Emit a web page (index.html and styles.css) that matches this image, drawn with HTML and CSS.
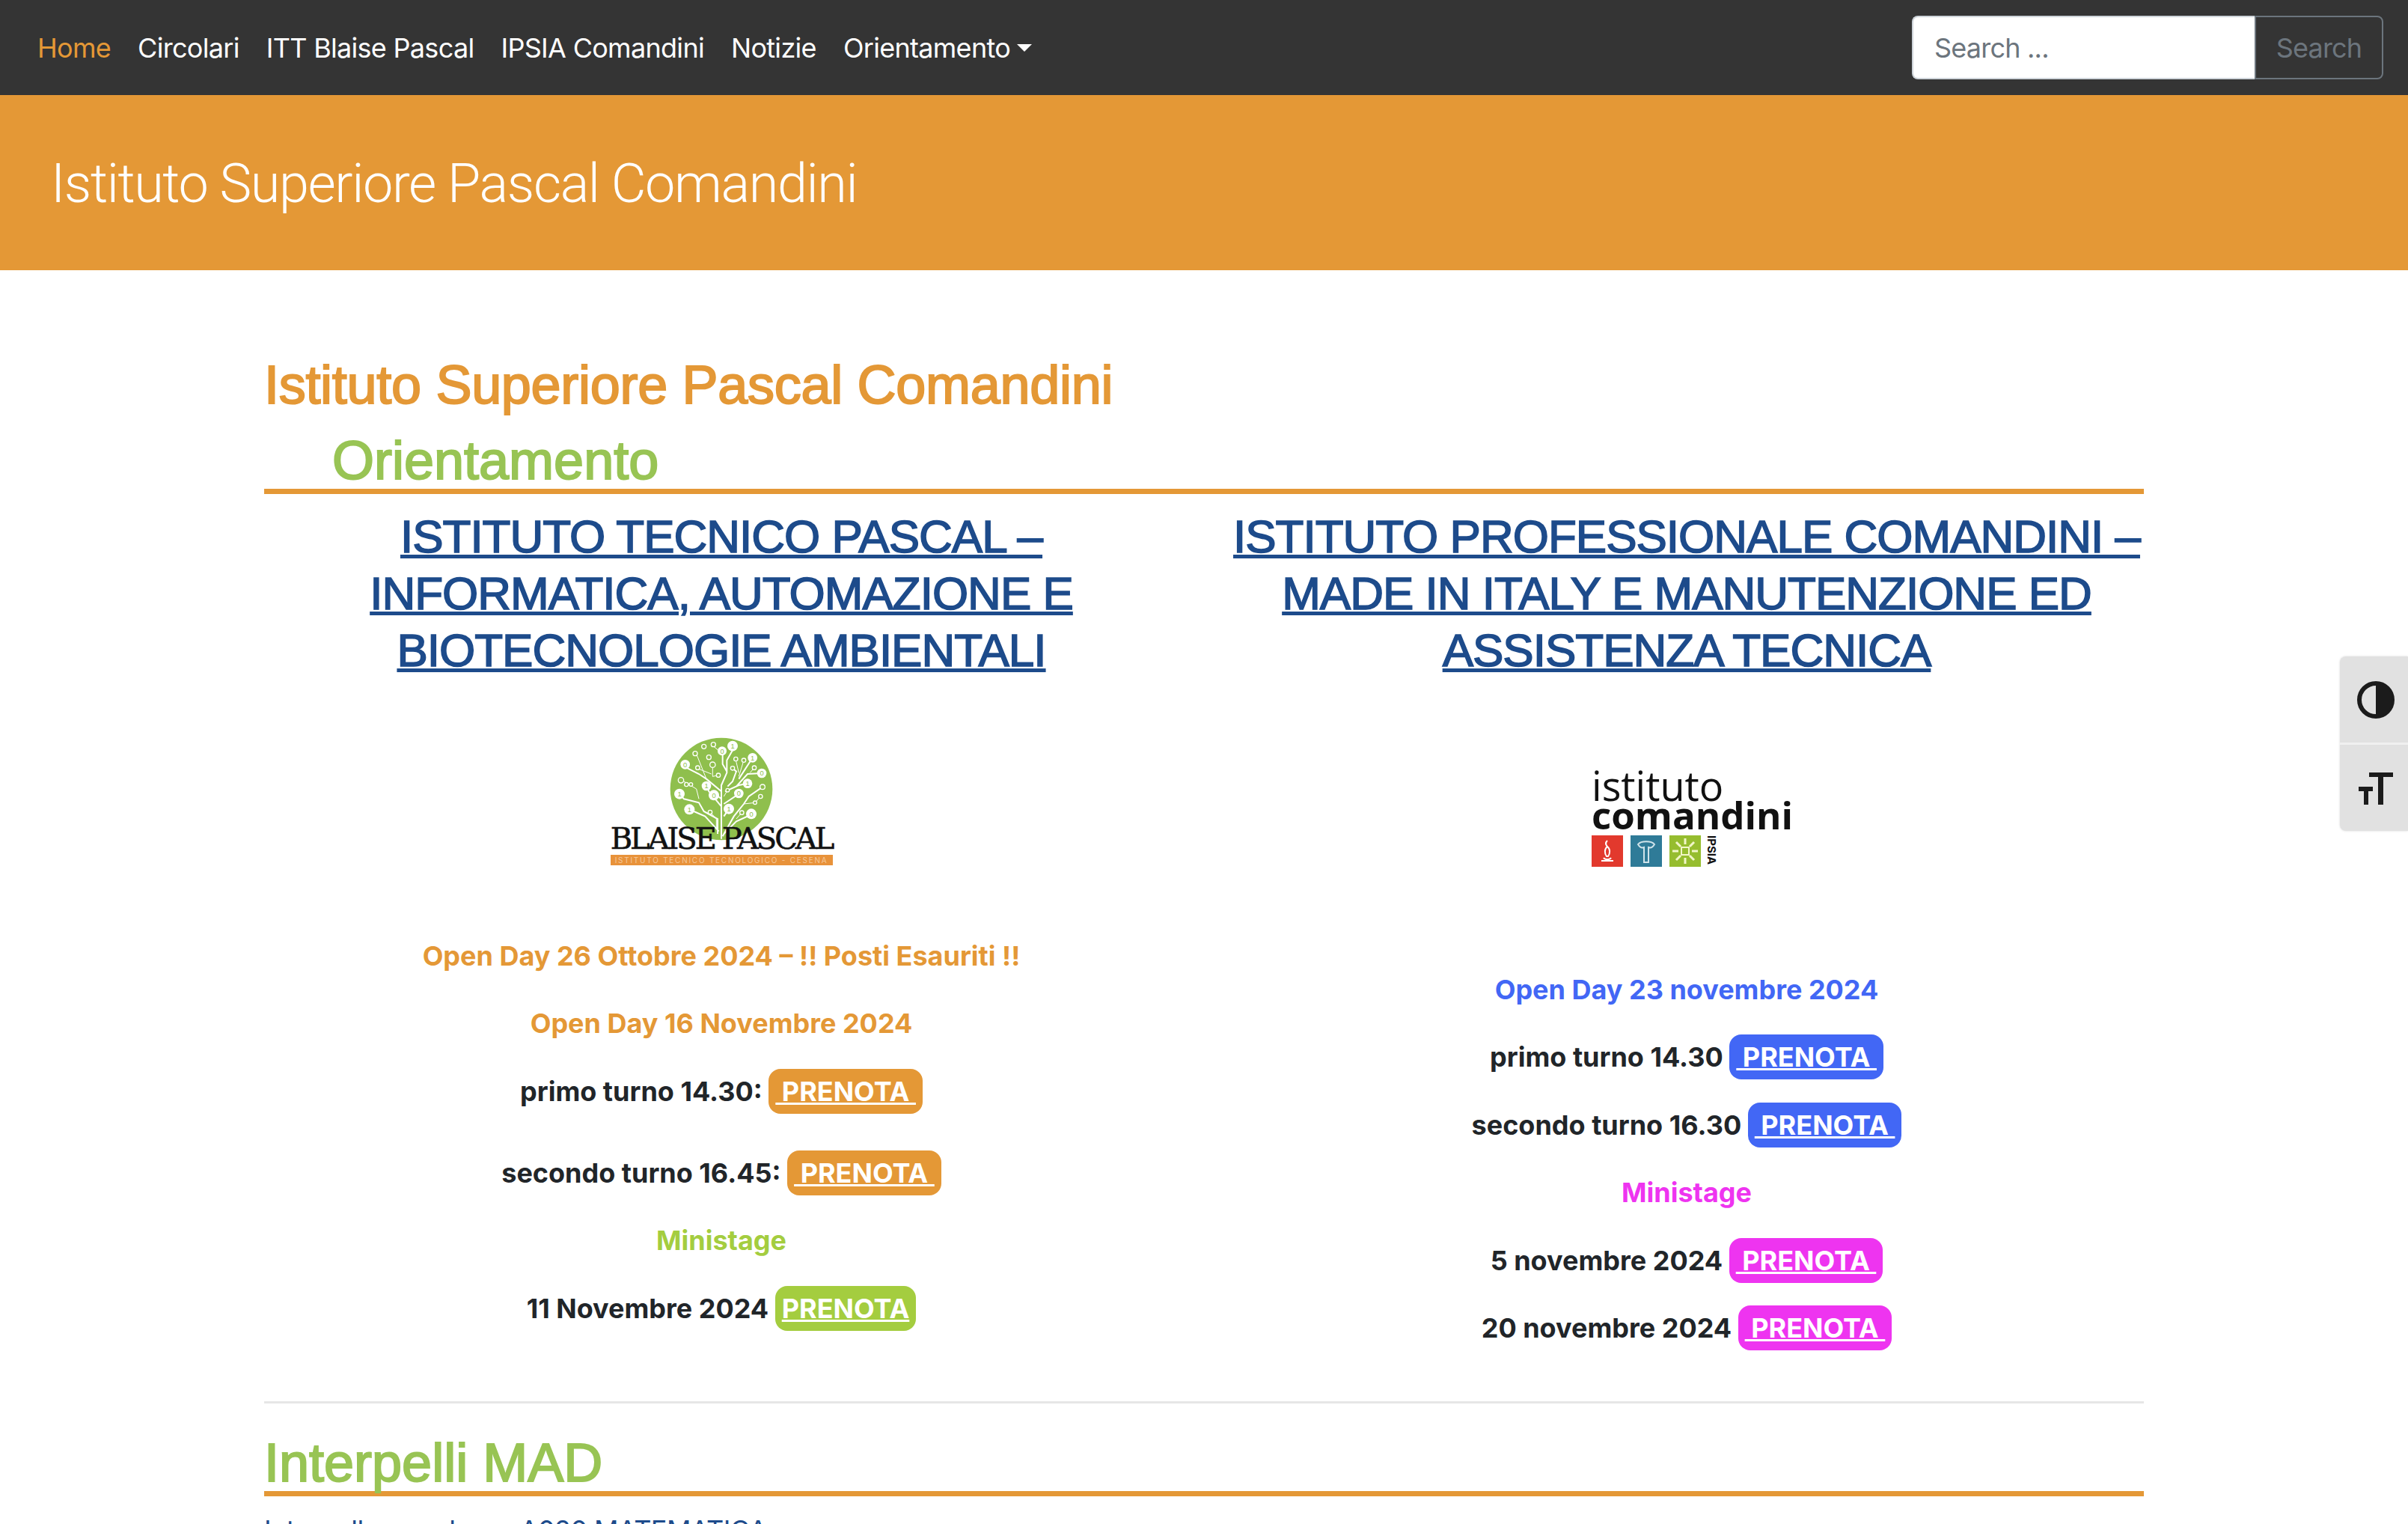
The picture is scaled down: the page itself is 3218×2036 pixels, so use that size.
FILE: index.html
```html
<!DOCTYPE html>
<html lang="it">
<head>
  <meta charset="UTF-8" />
  <title>Istituto Superiore Pascal Comandini</title>
  <link rel="stylesheet" href="styles.css">
</head>
<body>
  <nav class="navbar">
    <ul class="nav-links">
      <li><a class="active" href="#">Home</a></li>
      <li><a href="#">Circolari</a></li>
      <li><a href="#">ITT Blaise Pascal</a></li>
      <li><a href="#">IPSIA Comandini</a></li>
      <li><a href="#">Notizie</a></li>
      <li><a class="dropdown" href="#">Orientamento</a></li>
    </ul>
    <form class="search">
      <input type="text" placeholder="Search ..." />
      <button type="button">Search</button>
    </form>
  </nav>

  <header class="banner">Istituto Superiore Pascal Comandini</header>

  <main class="container">
    <h1 class="site-title">Istituto Superiore Pascal Comandini</h1>
    <h2 class="section-title indented">Orientamento</h2>

    <div class="columns">
      <section class="col">
        <h3><a href="#">ISTITUTO TECNICO PASCAL – INFORMATICA, AUTOMAZIONE E BIOTECNOLOGIE AMBIENTALI</a></h3>
        <div class="logo logo-pascal">
          <svg class="tree" width="140" height="140" viewBox="580 200 420 420">
            <circle cx="790" cy="410" r="205" fill="#8fbf4d" />
            <g fill="none" stroke="#fff" stroke-width="6">
              <path d="M790 610V395L812 345V295L835 255M812 340L795 310V270M790 420L730 370L700 350L650 325M790 450L765 430M730 398L740 420L790 480M775 590V530L720 500L700 465L640 450L622 430M780 580L725 520L680 500M800 520L820 490M795 600L840 520L880 470L900 440L955 402M800 590L850 540L905 515M805 420L860 395L895 388M800 470L860 430M850 400L895 350L952 347M815 400L835 380L850 340L835 327M860 370L915 285" />
            </g>
            <g fill="none" stroke="#fff" stroke-width="3">
              <path d="M795 270L760 240M750 350L700 330M730 370L690 270M755 320V360L778 355M640 380L690 410L700 450M860 345L848 295M880 295L860 360M905 345L922 325M880 470L925 465L947 440M745 503L770 530V570M872 505L850 530M815 415L800 440" />
            </g>
            <g fill="#8fbf4d" stroke="#fff" stroke-width="4">
              <circle cx="720" cy="240" r="9" /><circle cx="758" cy="232" r="9" /><circle cx="685" cy="268" r="9" />
              <circle cx="740" cy="283" r="9" /><circle cx="695" cy="325" r="8" /><circle cx="755" cy="313" r="11" />
              <circle cx="778" cy="355" r="8" /><circle cx="628" cy="375" r="11" /><circle cx="650" cy="392" r="8" />
              <circle cx="668" cy="392" r="7" /><circle cx="848" cy="290" r="8" /><circle cx="880" cy="295" r="8" />
              <circle cx="835" cy="327" r="8" /><circle cx="922" cy="325" r="8" /><circle cx="955" cy="402" r="10" />
              <circle cx="947" cy="440" r="8" /><circle cx="815" cy="415" r="7" /><circle cx="745" cy="503" r="8" />
              <circle cx="872" cy="505" r="8" /><circle cx="925" cy="465" r="7" />
            </g>
            <g fill="#fff">
              <circle cx="835" cy="238" r="21" /><circle cx="793" cy="258" r="18" /><circle cx="915" cy="285" r="19" />
              <circle cx="645" cy="312" r="19" /><circle cx="952" cy="347" r="19" /><circle cx="895" cy="388" r="19" />
              <circle cx="730" cy="398" r="19" /><circle cx="622" cy="430" r="21" /><circle cx="760" cy="435" r="21" />
              <circle cx="860" cy="428" r="19" /><circle cx="662" cy="492" r="21" /><circle cx="820" cy="490" r="21" />
              <circle cx="910" cy="510" r="21" />
            </g>
            <g class="tree-digits" fill="#8fbf4d" text-anchor="middle">
              <text x="835" y="248">1</text><text x="793" y="268">0</text><text x="915" y="295">1</text>
              <text x="645" y="322">0</text><text x="952" y="357">0</text><text x="895" y="398">1</text>
              <text x="730" y="408">1</text><text x="622" y="440">1</text><text x="760" y="445">0</text>
              <text x="860" y="438">0</text><text x="662" y="502">1</text><text x="820" y="500">1</text>
              <text x="910" y="520">0</text>
            </g>
          </svg>
          <div class="pascal-name">BLAISE PASCAL</div>
          <div class="pascal-sub">ISTITUTO TECNICO TECNOLOGICO - CESENA</div>
        </div>
        <p class="orange">Open Day 26 Ottobre 2024 – !! Posti Esauriti !!</p>
        <p class="orange">Open Day 16 Novembre 2024</p>
        <p class="spaced">primo turno 14.30: <a class="badge bg-orange" href="#">&nbsp;PRENOTA&nbsp;</a></p>
        <p>secondo turno 16.45: <a class="badge bg-orange" href="#">&nbsp;PRENOTA&nbsp;</a></p>
        <p class="green">Ministage</p>
        <p>11 Novembre 2024 <a class="badge bg-green" href="#">PRENOTA</a></p>
      </section>

      <section class="col">
        <h3><a href="#">ISTITUTO PROFESSIONALE COMANDINI – MADE IN ITALY E MANUTENZIONE ED ASSISTENZA TECNICA</a></h3>
        <div class="logo logo-comandini">
          <div class="com-inner">
            <div class="com-light">istituto</div>
            <div class="com-bold">comandini</div>
            <div class="com-row">
              <span class="tile tile-red">
                <svg width="40" height="40" viewBox="0 0 40 40" fill="none" stroke="#fff" stroke-width="2"><path d="M20 6c-3 3-2 6 0 8-4 3-4 9-1 13h2c3-4 3-10-1-13M12 33h16M15 29c2 3 8 3 10 0" /></svg>
              </span>
              <span class="tile tile-blue">
                <svg width="40" height="40" viewBox="0 0 40 40" fill="none" stroke="#cfe3ea" stroke-width="2"><path d="M9 11c4-5 18-5 22 0-3 5-6 5-8 4v20h-6V15c-2 1-5 1-8-4z" /></svg>
              </span>
              <span class="tile tile-green">
                <svg width="40" height="40" viewBox="0 0 40 40" fill="none" stroke="#f1f6c8" stroke-width="3"><rect x="15" y="15" width="10" height="10" stroke-width="2" /><path d="M20 3v8M20 29v8M3 20h8M29 20h8M8 8l6 6M26 26l6 6M32 8l-6 6M14 26l-6 6" /></svg>
              </span>
              <span class="ipsia">IPSIA</span>
            </div>
          </div>
        </div>
        <p class="blue">Open Day 23 novembre 2024</p>
        <p>primo turno 14.30 <a class="badge bg-blue" href="#">&nbsp;PRENOTA&nbsp;</a></p>
        <p>secondo turno 16.30 <a class="badge bg-blue" href="#">&nbsp;PRENOTA&nbsp;</a></p>
        <p class="magenta">Ministage</p>
        <p>5 novembre 2024 <a class="badge bg-magenta" href="#">&nbsp;PRENOTA&nbsp;</a></p>
        <p>20 novembre 2024 <a class="badge bg-magenta" href="#">&nbsp;PRENOTA&nbsp;</a></p>
      </section>
    </div>

    <hr />

    <h2 class="section-title">Interpelli MAD</h2>
    <a class="list-link" href="#">Interpello per classe A020 MATEMATICA</a>
  </main>

  <aside class="a11y">
    <button type="button" aria-label="Contrasto">
      <svg width="50" height="50" viewBox="0 0 50 50"><circle cx="25" cy="25" r="22" fill="none" stroke="#1b1b1b" stroke-width="6" /><path d="M25 3a22 22 0 0 1 0 44z" fill="#1b1b1b" /></svg>
    </button>
    <button type="button" aria-label="Dimensione testo">
      <svg width="46" height="46" viewBox="0 0 46 46" fill="#1b1b1b"><path d="M14 2h32v6H33v37h-7V8H14zM0 21h19v6h-6v18H7V27H0z" /></svg>
    </button>
  </aside>
</body>
</html>
```

FILE: styles.css
```css
html, body {
  height: 2036px;
  overflow: hidden;
}
body {
  margin: 0;
  font-family: Inter, "Liberation Sans", sans-serif;
  font-size: 36px;
  line-height: 54px;
  color: #212529;
  background: #fff;
}

/* top bar */
.navbar {
  height: 127px;
  background: #343434;
  display: flex;
  align-items: center;
  justify-content: space-between;
  padding: 0 33px 0 50px;
  box-sizing: border-box;
  letter-spacing: -0.7px;
}
.nav-links {
  display: flex;
  gap: 36px;
  list-style: none;
  margin: 0;
  padding: 0;
}
.nav-links a {
  color: #fff;
  text-decoration: none;
  white-space: nowrap;
}
.nav-links a.active {
  color: #e49836;
}
.dropdown::after {
  content: "";
  display: inline-block;
  margin-left: 9px;
  vertical-align: 8px;
  border-top: 10px solid #fff;
  border-left: 10px solid transparent;
  border-right: 10px solid transparent;
}
.search {
  display: flex;
  height: 85px;
}
.search input {
  width: 458px;
  box-sizing: border-box;
  padding: 0 28px;
  font: inherit;
  letter-spacing: -0.8px;
  border: 2px solid #ced4da;
  border-right: 0;
  border-radius: 8px 0 0 8px;
  background: #fff;
}
.search input::placeholder {
  color: #6c757d;
  opacity: 1;
}
.search button {
  width: 172px;
  box-sizing: border-box;
  font: inherit;
  letter-spacing: -0.8px;
  color: #6c757d;
  background: transparent;
  border: 2px solid #6c757d;
  border-radius: 0 8px 8px 0;
}

.banner {
  height: 234px;
  background: #e49836;
  color: #fff;
  display: flex;
  align-items: center;
  padding: 4px 0 0 68px;
  box-sizing: border-box;
  font-family: Roboto, "Liberation Sans", sans-serif;
  font-weight: 300;
  font-size: 72px;
  letter-spacing: -1.4px;
}

/* main content */
.container {
  width: 2512px;
  margin: 0 auto;
  padding-top: 110px;
}
.site-title {
  margin: 0;
  font-family: "Liberation Sans", sans-serif;
  font-size: 72px;
  line-height: 86px;
  font-weight: 400;
  letter-spacing: -0.3px;
  -webkit-text-stroke: 2px #e49836;
  color: #e49836;
}
.section-title {
  margin: 0;
  font-family: "Liberation Sans", sans-serif;
  font-size: 72px;
  line-height: 76px;
  font-weight: 400;
  -webkit-text-stroke: 2px #98c454;
  color: #98c454;
  border-bottom: 7px solid #e49836;
}
.indented {
  padding-left: 91px;
  margin-top: 20px;
}
.columns {
  display: grid;
  grid-template-columns: 1fr 1fr;
  gap: 68px;
}
.col {
  text-align: center;
}
.col h3 {
  margin: 19px 0 0;
  font-family: "Liberation Sans", sans-serif;
  font-size: 62px;
  line-height: 76px;
  font-weight: 400;
  letter-spacing: -1px;
}
.col h3 a {
  color: #1d4b8b;
  -webkit-text-stroke: 1.6px #1d4b8b;
  text-decoration-thickness: 5px;
}
.col p {
  margin: 0 0 36.4px;
  font-weight: 700;
}
.col p.spaced {
  margin-bottom: 55px;
}
.orange { color: #e49836; }
.green { color: #a4cd3f; }
.blue { color: #4267f5; }
.magenta { color: #ee34f0; }
.badge {
  padding: 8px 9px;
  border-radius: 16px;
  color: #fff;
  font-weight: 700;
}
.bg-orange { background: #e49836; }
.bg-green { background: #a4cd3f; }
.bg-blue { background: #4267f5; }
.bg-magenta { background: #ee34f0; }

/* logos */
.logo {
  box-sizing: border-box;
  display: flex;
  flex-direction: column;
  align-items: center;
  justify-content: center;
}
.logo-pascal {
  height: 343px;
  padding-bottom: 18px;
}
.tree {
  margin-bottom: -23px;
}
.tree-digits {
  font-family: "Liberation Sans", sans-serif;
  font-size: 28px;
  line-height: 1;
}
.pascal-name {
  position: relative;
  font-family: "DejaVu Serif", serif;
  font-size: 40px;
  line-height: 38px;
  letter-spacing: -3px;
  -webkit-text-stroke: 0.6px #111;
  color: #111;
  white-space: nowrap;
}
.pascal-sub {
  width: 297px;
  margin-top: 3px;
  background: #e8923a;
  color: #f5c89a;
  font-size: 10px;
  line-height: 14px;
  letter-spacing: 1.75px;
  white-space: nowrap;
  overflow: hidden;
}
.logo-comandini {
  height: 388px;
  padding-bottom: 16px;
  color: #111;
}
.com-inner {
  width: 268px;
  margin-left: 14px;
  text-align: left;
}
.com-light {
  font-family: "Open Sans", sans-serif;
  font-size: 54px;
  line-height: 42px;
}
.com-bold {
  font-family: "Open Sans", sans-serif;
  font-size: 51px;
  line-height: 36px;
  font-weight: 700;
  margin-bottom: 10px;
}
.com-row {
  display: flex;
  gap: 10px;
  align-items: flex-start;
}
.tile {
  width: 42px;
  height: 42px;
  display: flex;
  align-items: center;
  justify-content: center;
}
.tile-red { background: #e2392d; }
.tile-blue { background: #2f7b98; }
.tile-green { background: #96bd2f; }
.ipsia {
  writing-mode: vertical-rl;
  font-size: 15px;
  line-height: 15px;
  font-weight: 700;
  margin-left: -3px;
}

hr {
  border: 0;
  border-top: 3px solid #e6e6e6;
  margin: 35px 0 41px;
}
.list-link {
  display: block;
  margin-top: 18px;
  color: #1d4b8b;
  letter-spacing: -0.6px;
  text-decoration: underline;
}

/* accessibility widget */
.a11y {
  position: absolute;
  top: 877px;
  right: 0;
  width: 91px;
  height: 233px;
  display: flex;
  flex-direction: column;
  gap: 3px;
  border-radius: 8px 0 0 8px;
  overflow: hidden;
  background: #f0f0f0;
  box-shadow: 0 0 3px rgba(0, 0, 0, 0.15);
}
.a11y button {
  flex: 1;
  border: 0;
  padding: 0 0 0 5px;
  background: #e1e1e1;
  display: flex;
  align-items: center;
  justify-content: center;
}
```
